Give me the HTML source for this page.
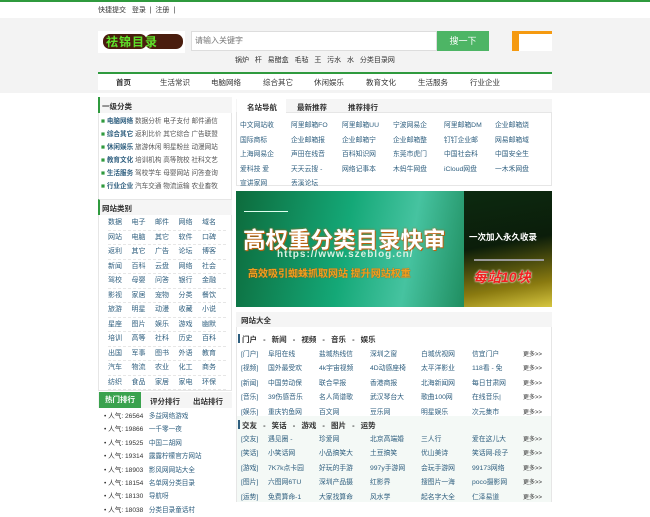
<!DOCTYPE html>
<html><head><meta charset="utf-8"><style>
*{margin:0;padding:0;box-sizing:border-box}
body{width:650px;height:500px;overflow:hidden;background:#fff;font-family:"Liberation Sans","Noto Sans CJK SC",sans-serif;font-size:7.5px;color:#333;position:relative}
.a{position:absolute;white-space:nowrap}
.g{color:#2f5f7f}
.gr span{display:inline-block;width:23.5px}
.gr div{height:14.5px;border-bottom:1px dashed #e6e6e6;width:118px}
</style></head><body>
<div class="a" style="left:0;top:0;width:650px;height:2px;background:#2f9a3e"></div>
<div class="a" style="left:98px;top:5px;color:#333;font-size:7px">快捷提交 &nbsp; 登录 &nbsp;|&nbsp; 注册 &nbsp;|</div>
<div class="a" style="left:0;top:18px;width:650px;height:75px;background:#f3f3f3"></div>
<div class="a" style="left:98px;top:31px;width:87px;height:22px;background:#fff"></div>
<div class="a" style="left:103px;top:34px;width:44px;height:15px;background:#4a1d0e;border-radius:7px"></div>
<div class="a" style="left:145px;top:34px;width:38px;height:15px;background:#4a1d0e;border-radius:7px"></div>
<div class="a" style="left:106px;top:33px;font-size:12px;font-weight:bold;color:#5fe22a;letter-spacing:1px">祛锦目录</div>
<div class="a" style="left:191px;top:31px;width:246px;height:20px;background:#fff;border:1px solid #ddd"></div>
<div class="a" style="left:195px;top:35px;font-size:8px;color:#777">请输入关键字</div>
<div class="a" style="left:437px;top:31px;width:52px;height:20px;background:#4db565;color:#fff;font-size:9px;text-align:center;line-height:20px">搜一下</div>
<div class="a" style="left:512px;top:31px;width:40px;height:20px;background:#fff;border-top:3px solid #f59a10;border-left:7px solid #f59a10"></div>
<div class="a" style="left:235px;top:55px;color:#333;font-size:7px">锅炉 &nbsp; 杆 &nbsp; 易醋盒 &nbsp; 毛毡 &nbsp; 王 &nbsp; 污水 &nbsp; 水 &nbsp; 分类目录网</div>
<div class="a" style="left:98px;top:72px;width:454px;height:18px;background:#fff;border-top:2px solid #2f9a3e"></div>
<div class="a" style="left:116px;top:77px;font-weight:bold;color:#333">首页</div>
<div class="a" style="left:160px;top:77px">生活常识</div>
<div class="a" style="left:211px;top:77px">电脑网络</div>
<div class="a" style="left:263px;top:77px">综合其它</div>
<div class="a" style="left:314px;top:77px">休闲娱乐</div>
<div class="a" style="left:366px;top:77px">教育文化</div>
<div class="a" style="left:418px;top:77px">生活服务</div>
<div class="a" style="left:470px;top:77px">行业企业</div>

<!-- left -->
<div class="a" style="left:98px;top:97px;width:134px;height:294px;border:1px solid #e6e6e6"></div>
<div class="a" style="left:98px;top:97px;width:134px;height:16px;background:#f5f5f5;border-left:2px solid #2f9a3e"></div>
<div class="a" style="left:102px;top:101px;font-weight:bold">一级分类</div>
<div class="a" style="left:101px;top:115px;line-height:13px;font-size:6.6px;width:130px;overflow:hidden">
<div><span style="color:#2f9a3e">■</span> <b class="g">电脑网络</b> <span style="color:#555">数据分析 电子支付 邮件通信</span></div>
<div><span style="color:#2f9a3e">■</span> <b class="g">综合其它</b> <span style="color:#555">返利比价 其它综合 广告联盟</span></div>
<div><span style="color:#2f9a3e">■</span> <b class="g">休闲娱乐</b> <span style="color:#555">旅游休闲 明星粉丝 动漫网站</span></div>
<div><span style="color:#2f9a3e">■</span> <b class="g">教育文化</b> <span style="color:#555">培训机构 高等院校 社科文艺</span></div>
<div><span style="color:#2f9a3e">■</span> <b class="g">生活服务</b> <span style="color:#555">驾校学车 母婴网站 问答查询</span></div>
<div><span style="color:#2f9a3e">■</span> <b class="g">行业企业</b> <span style="color:#555">汽车交通 物流运输 农业畜牧</span></div>
</div>
<div class="a" style="left:98px;top:199px;width:134px;height:16px;background:#f5f5f5;border-left:2px solid #2f9a3e;border-top:1px solid #e6e6e6"></div>
<div class="a" style="left:102px;top:203px;font-weight:bold">网站类别</div>
<div class="a g gr" style="left:108px;top:216px;line-height:13px;font-size:7px">
<div><span>数据</span><span>电子</span><span>邮件</span><span>网络</span><span>域名</span></div>
<div><span>网站</span><span>电脑</span><span>其它</span><span>软件</span><span>口碑</span></div>
<div><span>返利</span><span>其它</span><span>广告</span><span>论坛</span><span>博客</span></div>
<div><span>新闻</span><span>百科</span><span>云盘</span><span>网络</span><span>社会</span></div>
<div><span>驾校</span><span>母婴</span><span>问答</span><span>银行</span><span>金融</span></div>
<div><span>影视</span><span>家居</span><span>宠物</span><span>分类</span><span>餐饮</span></div>
<div><span>旅游</span><span>明星</span><span>动漫</span><span>收藏</span><span>小说</span></div>
<div><span>星座</span><span>图片</span><span>娱乐</span><span>游戏</span><span>幽默</span></div>
<div><span>培训</span><span>高等</span><span>社科</span><span>历史</span><span>百科</span></div>
<div><span>出国</span><span>军事</span><span>图书</span><span>外语</span><span>教育</span></div>
<div><span>汽车</span><span>物流</span><span>农业</span><span>化工</span><span>商务</span></div>
<div><span>纺织</span><span>食品</span><span>家居</span><span>家电</span><span>环保</span></div>
</div>
<div class="a" style="left:98px;top:392px;width:134px;height:16px;background:#f5f5f5"></div>
<div class="a" style="left:99px;top:392px;width:42px;height:16px;background:#3aa24e;color:#fff;font-weight:bold;text-align:center;line-height:16px">热门排行</div>
<div class="a" style="left:150px;top:396px;font-weight:bold">评分排行</div>
<div class="a" style="left:193px;top:396px;font-weight:bold">出站排行</div>
<div class="a" style="left:104px;top:410px;line-height:13.4px;font-size:6.6px">
<div>• 人气: 26564 &nbsp; <span class="g">多益网络游戏</span></div>
<div>• 人气: 19866 &nbsp; <span class="g">一千零一夜</span></div>
<div>• 人气: 19525 &nbsp; <span class="g">中国二胡网</span></div>
<div>• 人气: 19314 &nbsp; <span class="g">露露柠檬官方网站</span></div>
<div>• 人气: 18903 &nbsp; <span class="g">影风网网站大全</span></div>
<div>• 人气: 18154 &nbsp; <span class="g">名单网分类目录</span></div>
<div>• 人气: 18130 &nbsp; <span class="g">导航呀</span></div>
<div>• 人气: 18038 &nbsp; <span class="g">分类目录童话村</span></div>
</div>

<!-- middle tabs -->
<div class="a" style="left:236px;top:99px;width:316px;height:87px;border:1px solid #e6e6e6"></div>
<div class="a" style="left:236px;top:99px;width:316px;height:14px;background:#f5f5f5;border-bottom:1px solid #e6e6e6"></div>
<div class="a" style="left:237px;top:99px;width:49px;height:15px;background:#fff"></div>
<div class="a" style="left:247px;top:102px;font-weight:bold">名站导航</div>
<div class="a" style="left:297px;top:102px;font-weight:bold">最新推荐</div>
<div class="a" style="left:348px;top:102px;font-weight:bold">推荐排行</div>
<div class="a g" style="left:240px;top:119px;line-height:14.6px;font-size:6.8px">
<div><span style="display:inline-block;width:51px">中文网站收</span><span style="display:inline-block;width:51px">阿里邮箱FO</span><span style="display:inline-block;width:51px">阿里邮箱UU</span><span style="display:inline-block;width:51px">宁波网易企</span><span style="display:inline-block;width:51px">阿里邮箱DM</span>企业邮箱烧</div>
<div><span style="display:inline-block;width:51px">国际商标</span><span style="display:inline-block;width:51px">企业邮箱报</span><span style="display:inline-block;width:51px">企业邮箱宁</span><span style="display:inline-block;width:51px">企业邮箱整</span><span style="display:inline-block;width:51px">钉钉企业邮</span>网易邮箱域</div>
<div><span style="display:inline-block;width:51px">上海网易企</span><span style="display:inline-block;width:51px">声田在线音</span><span style="display:inline-block;width:51px">百科知识网</span><span style="display:inline-block;width:51px">东莞市虎门</span><span style="display:inline-block;width:51px">中国社会科</span>中国安全生</div>
<div><span style="display:inline-block;width:51px">爱科技 爱</span><span style="display:inline-block;width:51px">天天云搜 -</span><span style="display:inline-block;width:51px">网络记事本</span><span style="display:inline-block;width:51px">木蚂牛网盘</span><span style="display:inline-block;width:51px">iCloud网盘</span>一木禾网盘</div>
<div><span style="display:inline-block;width:51px">宣讲家网</span>丢溪论坛</div>
</div>

<!-- banner -->
<div class="a" style="left:236px;top:191px;width:316px;height:116px;background:linear-gradient(100deg,#0d6b3c 0%,#14a877 35%,#46c3a0 55%,#1d8a5c 75%,#0b3a20 100%);overflow:hidden">
<div class="a" style="left:228px;top:0;width:88px;height:116px;background:linear-gradient(170deg,#0c2a10 0%,#0b1d0a 45%,#8a7a10 80%,#d6c640 100%)"></div>
<div class="a" style="left:8px;top:20px;width:44px;height:1px;background:#dfe"></div>
<div class="a" style="left:7px;top:32px;font-size:22.5px;font-weight:bold;color:#fff;text-shadow:0 0 2px #c06010,1px 1px 0 #c06010">高权重分类目录快审</div>
<div class="a" style="left:41px;top:58px;font-size:10px;font-weight:bold;color:#d8f0e0;letter-spacing:1px">https://www.szeblog.cn/</div>
<div class="a" style="left:12px;top:74px;font-size:10px;font-weight:bold;color:#f0a020;text-shadow:0 0 1px #a04000">高效吸引蜘蛛抓取网站 提升网站权重</div>
<div class="a" style="left:233px;top:40px;font-size:8.5px;font-weight:bold;color:#fff">一次加入永久收录</div>
<div class="a" style="left:238px;top:68px;width:70px;height:2px;background:#999"></div>
<div class="a" style="left:237px;top:76px;font-size:14px;font-weight:bold;font-style:italic;color:#f02020;text-shadow:0 0 1px #fff,0 0 2px #fff">每站10块</div>
</div>

<!-- 网站大全 -->
<div class="a" style="left:236px;top:312px;width:316px;height:190px;border:1px solid #e6e6e6"></div>
<div class="a" style="left:236px;top:312px;width:316px;height:15px;background:#f5f5f5"></div>
<div class="a" style="left:241px;top:315px;font-weight:bold">网站大全</div>
<div class="a" style="left:237px;top:416px;width:314px;height:86px;background:#f4f9f6"></div>
<div class="a" style="left:238px;top:334px;width:2px;height:9px;background:#2f5f7f"></div>
<div class="a" style="left:242px;top:334px;font-weight:bold;word-spacing:4px">门户 - 新闻 - 视频 - 音乐 - 娱乐</div>
<div class="a" style="left:238px;top:420px;width:2px;height:9px;background:#2f5f7f"></div>
<div class="a" style="left:242px;top:420px;font-weight:bold;word-spacing:4px">交友 - 笑话 - 游戏 - 图片 - 运势</div>
<div class="a g" style="left:241px;top:348px;line-height:13.4px;font-size:6.8px">
<div><span style="display:inline-block;width:27px">[门户]</span><span style="display:inline-block;width:51px">阜阳在线</span><span style="display:inline-block;width:51px">盐城热线信</span><span style="display:inline-block;width:51px">深圳之窗</span><span style="display:inline-block;width:51px">白城优视网</span><span style="display:inline-block;width:51px">信宜门户</span><span style="font-size:6px;color:#333">更多&gt;&gt;</span></div>
<div><span style="display:inline-block;width:27px">[视频]</span><span style="display:inline-block;width:51px">国外最受欢</span><span style="display:inline-block;width:51px">4k宇宙视频</span><span style="display:inline-block;width:51px">4D动感座椅</span><span style="display:inline-block;width:51px">太平洋影业</span><span style="display:inline-block;width:51px">118看 - 免</span><span style="font-size:6px;color:#333">更多&gt;&gt;</span></div>
<div><span style="display:inline-block;width:27px">[新闻]</span><span style="display:inline-block;width:51px">中国劳动保</span><span style="display:inline-block;width:51px">联合早报</span><span style="display:inline-block;width:51px">香港商报</span><span style="display:inline-block;width:51px">北海新闻网</span><span style="display:inline-block;width:51px">每日甘肃网</span><span style="font-size:6px;color:#333">更多&gt;&gt;</span></div>
<div><span style="display:inline-block;width:27px">[音乐]</span><span style="display:inline-block;width:51px">39伤感音乐</span><span style="display:inline-block;width:51px">名人简谱歌</span><span style="display:inline-block;width:51px">武汉琴台大</span><span style="display:inline-block;width:51px">歌曲100网</span><span style="display:inline-block;width:51px">在线音乐|</span><span style="font-size:6px;color:#333">更多&gt;&gt;</span></div>
<div><span style="display:inline-block;width:27px">[娱乐]</span><span style="display:inline-block;width:51px">重庆钓鱼网</span><span style="display:inline-block;width:51px">百文网</span><span style="display:inline-block;width:51px">豆乐网</span><span style="display:inline-block;width:51px">明星娱乐</span><span style="display:inline-block;width:51px">次元集市</span><span style="font-size:6px;color:#333">更多&gt;&gt;</span></div>
</div>
<div class="a g" style="left:241px;top:433px;line-height:13.4px;font-size:6.8px">
<div><span style="display:inline-block;width:27px">[交友]</span><span style="display:inline-block;width:51px">遇见圈 -</span><span style="display:inline-block;width:51px">珍爱网</span><span style="display:inline-block;width:51px">北京高端婚</span><span style="display:inline-block;width:51px">三人行</span><span style="display:inline-block;width:51px">爱在这儿大</span><span style="font-size:6px;color:#333">更多&gt;&gt;</span></div>
<div><span style="display:inline-block;width:27px">[笑话]</span><span style="display:inline-block;width:51px">小笑话网</span><span style="display:inline-block;width:51px">小品搞笑大</span><span style="display:inline-block;width:51px">土豆搞笑</span><span style="display:inline-block;width:51px">优山美诗</span><span style="display:inline-block;width:51px">笑话网-段子</span><span style="font-size:6px;color:#333">更多&gt;&gt;</span></div>
<div><span style="display:inline-block;width:27px">[游戏]</span><span style="display:inline-block;width:51px">7K7k点卡园</span><span style="display:inline-block;width:51px">好玩的手游</span><span style="display:inline-block;width:51px">997y手游网</span><span style="display:inline-block;width:51px">会玩手游网</span><span style="display:inline-block;width:51px">99173网络</span><span style="font-size:6px;color:#333">更多&gt;&gt;</span></div>
<div><span style="display:inline-block;width:27px">[图片]</span><span style="display:inline-block;width:51px">六图网6TU</span><span style="display:inline-block;width:51px">深圳产品摄</span><span style="display:inline-block;width:51px">红影界</span><span style="display:inline-block;width:51px">搜图片一海</span><span style="display:inline-block;width:51px">poco摄影网</span><span style="font-size:6px;color:#333">更多&gt;&gt;</span></div>
<div><span style="display:inline-block;width:27px">[运势]</span><span style="display:inline-block;width:51px">免费算命-1</span><span style="display:inline-block;width:51px">大家找算命</span><span style="display:inline-block;width:51px">风水学</span><span style="display:inline-block;width:51px">起名字大全</span><span style="display:inline-block;width:51px">仁泽易道</span><span style="font-size:6px;color:#333">更多&gt;&gt;</span></div>
</div>
</body></html>
